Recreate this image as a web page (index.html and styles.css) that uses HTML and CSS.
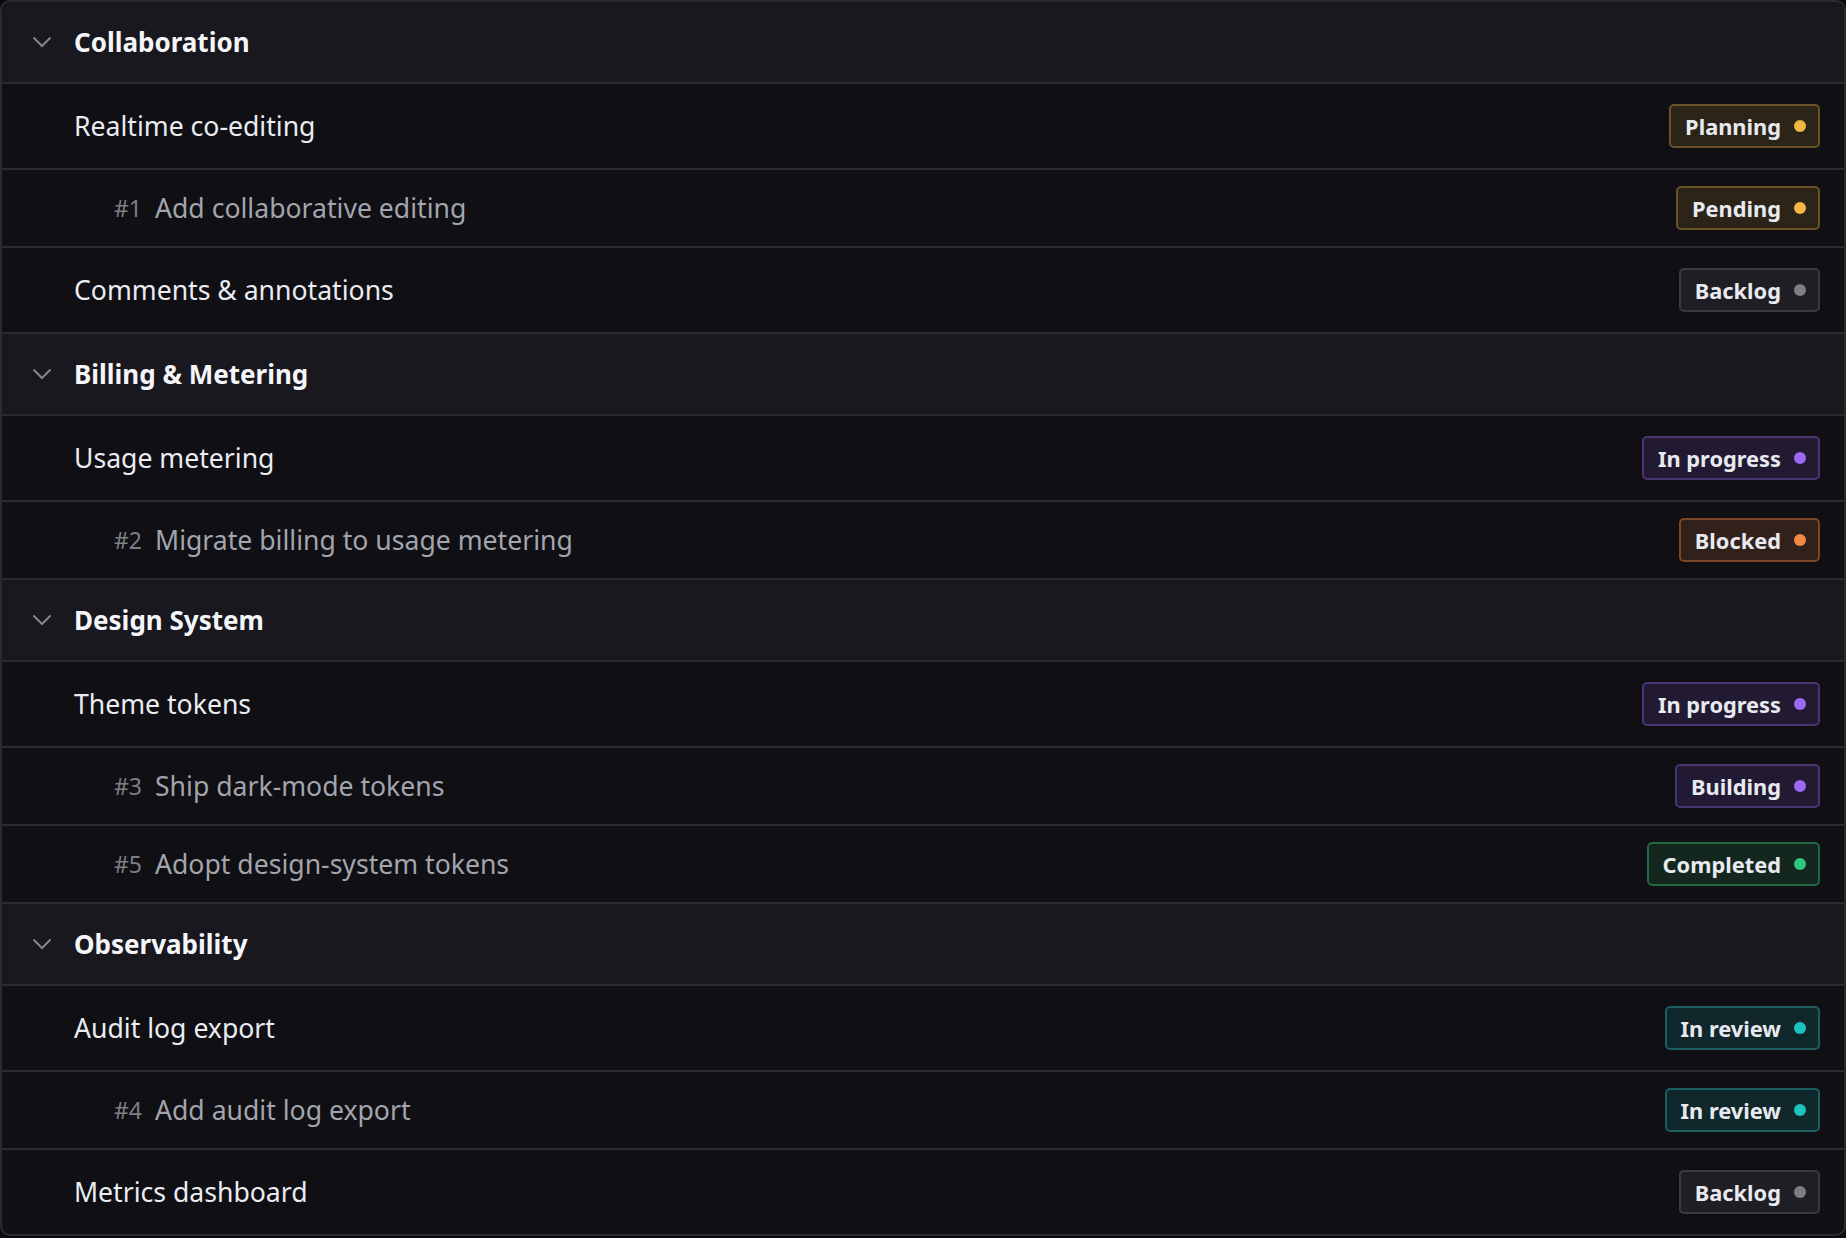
FILE: index.html
```html
<!DOCTYPE html>
<html lang="en">
<head>
  <meta charset="UTF-8">
  <meta name="viewport" content="width=device-width, initial-scale=1.0">
  <title>Roadmap</title>
  <link rel="stylesheet" href="styles.css">
</head>
<body>
  <div class="roadmap">

    <div class="group">
      <svg class="chevron" width="20" height="12" viewBox="0 0 20 12"><polyline points="1.5,1.5 10,10 18.5,1.5"/></svg>
      <span class="group-title">Collaboration</span>
    </div>
    <div class="item">
      <span class="item-title">Realtime co-editing</span>
      <span class="badge amber">Planning <i class="dot"></i></span>
    </div>
    <div class="issue">
      <span class="issue-num">#1</span>
      <span class="issue-title">Add collaborative editing</span>
      <span class="badge amber">Pending <i class="dot"></i></span>
    </div>
    <div class="item">
      <span class="item-title">Comments &amp; annotations</span>
      <span class="badge gray">Backlog <i class="dot"></i></span>
    </div>

    <div class="group">
      <svg class="chevron" width="20" height="12" viewBox="0 0 20 12"><polyline points="1.5,1.5 10,10 18.5,1.5"/></svg>
      <span class="group-title">Billing &amp; Metering</span>
    </div>
    <div class="item">
      <span class="item-title">Usage metering</span>
      <span class="badge violet">In progress <i class="dot"></i></span>
    </div>
    <div class="issue">
      <span class="issue-num">#2</span>
      <span class="issue-title">Migrate billing to usage metering</span>
      <span class="badge orange">Blocked <i class="dot"></i></span>
    </div>

    <div class="group">
      <svg class="chevron" width="20" height="12" viewBox="0 0 20 12"><polyline points="1.5,1.5 10,10 18.5,1.5"/></svg>
      <span class="group-title">Design System</span>
    </div>
    <div class="item">
      <span class="item-title">Theme tokens</span>
      <span class="badge violet">In progress <i class="dot"></i></span>
    </div>
    <div class="issue">
      <span class="issue-num">#3</span>
      <span class="issue-title">Ship dark-mode tokens</span>
      <span class="badge violet">Building <i class="dot"></i></span>
    </div>
    <div class="issue">
      <span class="issue-num">#5</span>
      <span class="issue-title">Adopt design-system tokens</span>
      <span class="badge green">Completed <i class="dot"></i></span>
    </div>

    <div class="group">
      <svg class="chevron" width="20" height="12" viewBox="0 0 20 12"><polyline points="1.5,1.5 10,10 18.5,1.5"/></svg>
      <span class="group-title">Observability</span>
    </div>
    <div class="item">
      <span class="item-title">Audit log export</span>
      <span class="badge teal">In review <i class="dot"></i></span>
    </div>
    <div class="issue">
      <span class="issue-num">#4</span>
      <span class="issue-title">Add audit log export</span>
      <span class="badge teal">In review <i class="dot"></i></span>
    </div>
    <div class="item">
      <span class="item-title">Metrics dashboard</span>
      <span class="badge gray">Backlog <i class="dot"></i></span>
    </div>

  </div>
</body>
</html>
```

FILE: styles.css
```css
body {
  margin: 0;
  background-color: #0c0c10;
  font-family: "Noto Sans", "Open Sans", sans-serif;
  color: #e8eaf0;
}

.roadmap {
  border: 2px solid #2a2a31;
  border-radius: 10px;
  overflow: hidden;
  background-color: #0f0f14;
}

.group, .item, .issue {
  display: flex;
  align-items: center;
  border-top: 2px solid #2a2a31;
  padding-right: 24px;
}

.roadmap > :first-child {
  border-top: none;
}

.group {
  height: 80px;
  padding-left: 30px;
  background-color: #18181e;
}

.chevron {
  fill: none;
  stroke: #85858d;
  stroke-width: 2;
  margin-right: 22px;
}

.group-title {
  font-size: 26px;
  font-weight: 700;
  color: #f5f6f9;
}

.item {
  height: 84px;
  padding-left: 72px;
}

.item-title {
  font-size: 26.6px;
  color: #eaecf1;
}

.issue {
  height: 76px;
  padding-left: 112px;
}

.issue-num {
  font-size: 23px;
  color: #7c7f88;
  margin-right: 13px;
}

.issue-title {
  font-size: 26.6px;
  color: #a2a5ad;
}

.badge {
  margin-left: auto;
  display: flex;
  align-items: center;
  height: 40px;
  padding: 0 12px 0 14px;
  border: 2px solid;
  border-radius: 5px;
  font-size: 21.8px;
  font-weight: 700;
  color: #e8eaf0;
}

.dot {
  width: 12px;
  height: 12px;
  border-radius: 50%;
  margin-left: 13px;
}

.amber { background-color: #2c2419; border-color: #6a5228; }
.amber .dot { background-color: #f1b742; }

.gray { background-color: #1e1e24; border-color: #393940; }
.gray .dot { background-color: #7e7e87; }

.violet { background-color: #221a33; border-color: #4a3473; }
.violet .dot { background-color: #9b69f3; }

.orange { background-color: #32211b; border-color: #7b4527; }
.orange .dot { background-color: #f28a42; }

.green { background-color: #13271f; border-color: #1f6a45; }
.green .dot { background-color: #2ec77f; }

.teal { background-color: #10272b; border-color: #1b5d61; }
.teal .dot { background-color: #1bc3bf; }
```
